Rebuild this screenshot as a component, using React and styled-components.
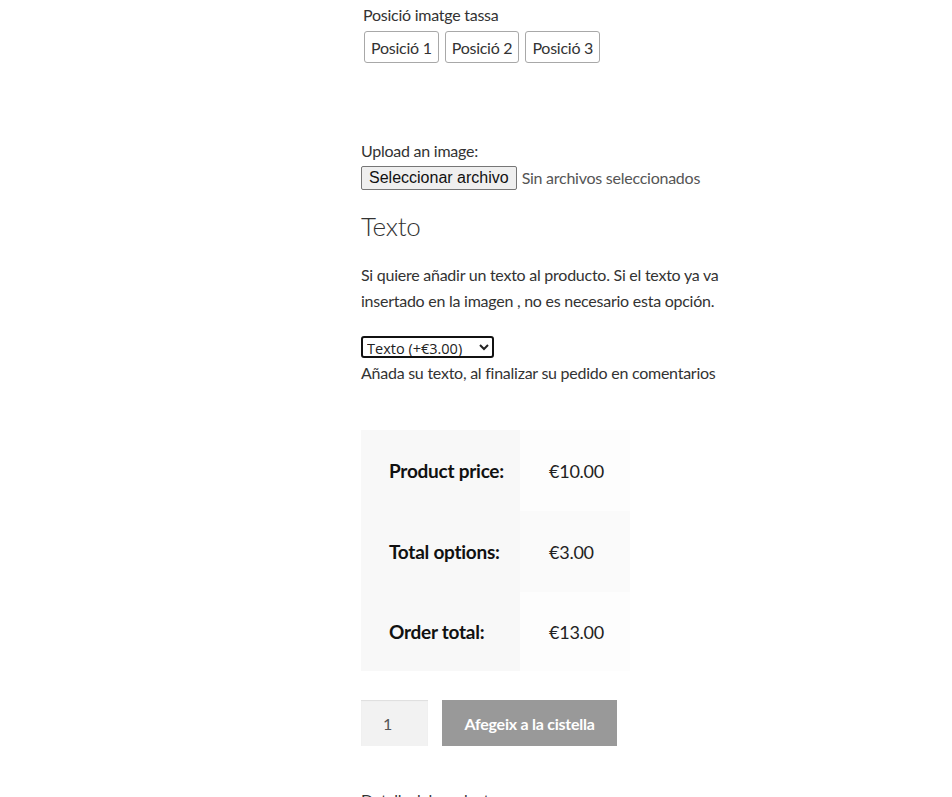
import React from "react";
import styled, { createGlobalStyle } from "styled-components";

const GlobalStyle = createGlobalStyle`
  html, body {
    margin: 0;
    padding: 0;
    background: #fff;
  }
  body {
    font-family: Lato, "Open Sans", sans-serif;
    font-size: 16px;
    letter-spacing: -0.25px;
    color: #333;
    overflow: hidden;
  }
`;

const Summary = styled.div`
  margin-left: 361px;
  width: 360px;
  padding-top: 2px;
  line-height: 26px;
`;

const OptionLabel = styled.div`
  padding-left: 2px;
`;

const PositionRow = styled.div`
  display: flex;
  gap: 6px;
  margin-top: 3px;
  padding-left: 3px;
`;

const PositionButton = styled.button`
  height: 32px;
  padding: 0 6px;
  background: #fff;
  border: 1px solid #a8a8a8;
  border-radius: 3px;
  font-family: inherit;
  font-size: 16px;
  letter-spacing: -0.25px;
  color: #333;
`;

const UploadBlock = styled.div`
  margin-top: 75px;
`;

const FileRow = styled.div`
  display: flex;
  align-items: center;
  gap: 5px;
  margin-top: 1px;
`;

const FileButton = styled.button`
  height: 24px;
  padding: 0 7px;
  background: #efefef;
  border: 1px solid #767676;
  border-radius: 2px;
  font-family: "Liberation Sans", Arial, sans-serif;
  font-size: 16px;
  letter-spacing: 0;
  color: #111;
`;

const FileStatus = styled.span`
  color: #555;
`;

const Heading = styled.h2`
  margin: 17px 0 0;
  font-size: 26px;
  font-weight: 300;
  line-height: 36px;
  color: #333;
`;

const Description = styled.p`
  margin: 18px 0 0;
  line-height: 26px;
`;

const TextSelect = styled.select`
  display: block;
  margin-top: 22px;
  width: 133px;
  height: 22px;
  font-family: "Open Sans", sans-serif;
  font-size: 14.5px;
  letter-spacing: 0;
  color: #222;
  border: 2px solid #111;
  border-radius: 3px;
  background: #fff;
  padding: 0;
`;

const Hint = styled.div`
  margin-top: 2px;
`;

const Totals = styled.table`
  margin-top: 44px;
  border-collapse: collapse;
  font-size: 19px;
`;

const LabelCell = styled.th`
  width: 159px;
  box-sizing: border-box;
  height: ${(p) => p.$h}px;
  padding: 0 0 0 28px;
  text-align: left;
  font-weight: 700;
  color: #111;
  background: #f8f8f8;
`;

const ValueCell = styled.td`
  width: 110px;
  box-sizing: border-box;
  padding: 0 0 0 29px;
  font-size: 18px;
  color: #222;
  background: ${(p) => (p.$alt ? "#fafafa" : "#fdfdfd")};
`;

const CartRow = styled.div`
  display: flex;
  gap: 14px;
  margin-top: 29px;
`;

const Quantity = styled.input`
  width: 67px;
  height: 46px;
  box-sizing: border-box;
  border: 0;
  background: #f2f2f2;
  padding: 0 0 0 22px;
  font-family: inherit;
  font-size: 16px;
  color: #555;
  box-shadow: inset 0 1px 1px rgba(0, 0, 0, 0.08);
`;

const AddButton = styled.button`
  width: 175px;
  height: 46px;
  border: 0;
  background: #999;
  color: #fff;
  font-family: inherit;
  font-size: 16px;
  letter-spacing: -0.25px;
  font-weight: 700;
`;

const Footer = styled.div`
  margin-top: 41px;
  color: #333;
`;

const rows = [
  { label: "Product price:", value: "€10.00", h: 81 },
  { label: "Total options:", value: "€3.00", h: 81, alt: true },
  { label: "Order total:", value: "€13.00", h: 79 },
];

const App = () => {
  return (
    <>
      <GlobalStyle />
      <Summary>
        <OptionLabel>Posició imatge tassa</OptionLabel>
        <PositionRow>
          <PositionButton>Posició 1</PositionButton>
          <PositionButton>Posició 2</PositionButton>
          <PositionButton>Posició 3</PositionButton>
        </PositionRow>

        <UploadBlock>
          <div>Upload an image:</div>
          <FileRow>
            <FileButton>Seleccionar archivo</FileButton>
            <FileStatus>Sin archivos seleccionados</FileStatus>
          </FileRow>
        </UploadBlock>

        <Heading>Texto</Heading>
        <Description>
          Si quiere añadir un texto al producto. Si el texto ya va insertado en
          la imagen , no es necesario esta opción.
        </Description>

        <TextSelect defaultValue="texto">
          <option value="texto">Texto (+€3.00)</option>
        </TextSelect>
        <Hint>Añada su texto, al finalizar su pedido en comentarios</Hint>

        <Totals>
          <tbody>
            {rows.map((r) => (
              <tr key={r.label}>
                <LabelCell $h={r.h}>{r.label}</LabelCell>
                <ValueCell $alt={r.alt}>{r.value}</ValueCell>
              </tr>
            ))}
          </tbody>
        </Totals>

        <CartRow>
          <Quantity type="number" defaultValue="1" />
          <AddButton>Afegeix a la cistella</AddButton>
        </CartRow>

        <Footer>Detalls del producte</Footer>
      </Summary>
    </>
  );
};

export default App;
